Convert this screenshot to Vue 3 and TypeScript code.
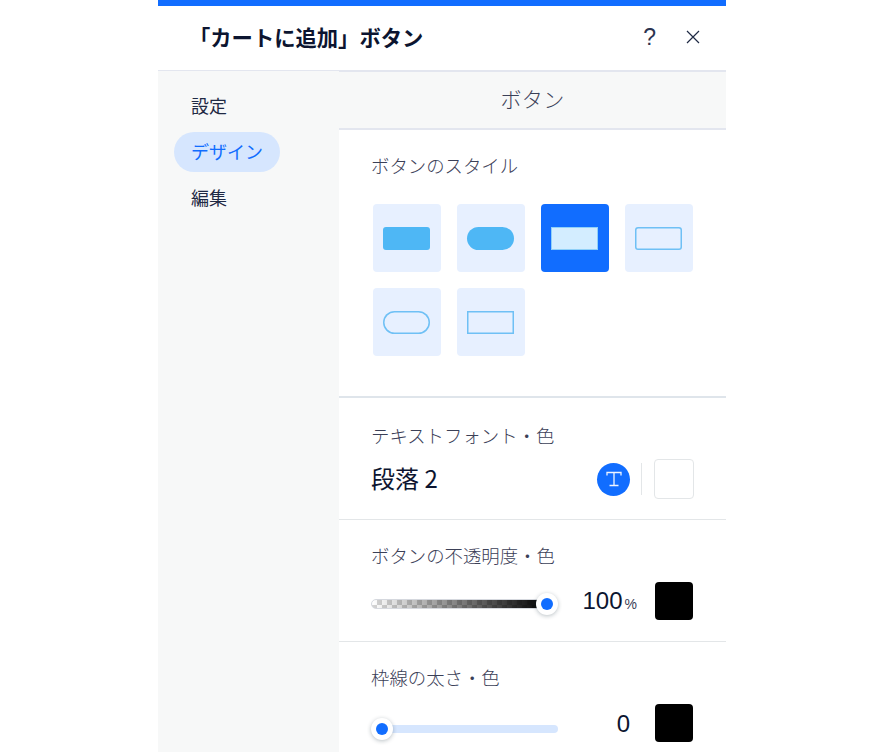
<script setup lang="ts">
interface Tile { id: number; shape: string; active?: boolean }
const tiles: Tile[] = [
  { id: 1, shape: 'fill-round' },
  { id: 2, shape: 'fill-pill' },
  { id: 3, shape: 'fill-square', active: true },
  { id: 4, shape: 'line-round' },
  { id: 5, shape: 'line-pill' },
  { id: 6, shape: 'line-square' },
]
</script>

<template>
  <div class="page">
    <div class="panel">
      <header class="head">
        <h1 class="title">「カートに追加」ボタン</h1>
        <div class="head-actions">
          <span class="help">?</span>
          <svg class="close" width="14" height="14" viewBox="0 0 14 14" aria-label="閉じる">
            <path d="M1 1 L13 13 M13 1 L1 13" stroke="#1f2a44" stroke-width="1.2" fill="none" />
          </svg>
        </div>
      </header>
      <div class="body">
        <nav class="side">
          <div class="nav-item">設定</div>
          <div class="nav-item current">デザイン</div>
          <div class="nav-item">編集</div>
        </nav>
        <main class="content">
          <div class="band">ボタン</div>
          <section class="sec-style">
            <div class="label">ボタンのスタイル</div>
            <div class="tiles">
              <div v-for="t in tiles" :key="t.id" class="tile" :class="{ active: t.active }">
                <span class="shape" :class="t.shape"></span>
              </div>
            </div>
          </section>
          <section class="sec-font">
            <div class="label">テキストフォント・色</div>
            <div class="font-row">
              <span class="para">段落 2</span>
              <span class="t-btn">
                <svg width="18" height="18" viewBox="0 0 18 18">
                  <path d="M2 5.5V2.5H16V5.5M9 2.5V15.5M4.5 15.5H13.5" stroke="#eef4ff" stroke-width="1.3" fill="none" />
                </svg>
              </span>
              <span class="vline"></span>
              <span class="swatch white"></span>
            </div>
          </section>
          <section class="sec-slider">
            <div class="label">ボタンの不透明度・色</div>
            <div class="slider-row">
              <div class="track checker">
                <span class="knob at-end"></span>
              </div>
              <div class="value"><span>100</span><small>%</small></div>
              <span class="swatch black"></span>
            </div>
          </section>
          <section class="sec-slider last">
            <div class="label">枠線の太さ・色</div>
            <div class="slider-row">
              <div class="track plain">
                <span class="knob at-start"></span>
              </div>
              <div class="value zero"><span>0</span></div>
              <span class="swatch black"></span>
            </div>
          </section>
        </main>
      </div>
    </div>
  </div>
</template>

<style>
html, body { margin: 0; background: #fff; overflow: hidden; }
</style>

<style scoped>
.page {
  width: 874px;
  height: 752px;
  overflow: hidden;
  font-family: "Noto Sans CJK JP", "Noto Sans", "Liberation Sans", sans-serif;
  color: #1f2a44;
}
.panel {
  width: 568px;
  height: 752px;
  margin-left: 158px;
  border-top: 6px solid #116dff;
  box-sizing: border-box;
  display: flex;
  flex-direction: column;
  overflow: hidden;
  background: #fff;
}
.head {
  height: 65px;
  flex: none;
  display: flex;
  align-items: center;
  justify-content: space-between;
  padding: 0 26px 3px 31px;
  box-sizing: border-box;
  border-bottom: 1px solid #e3e6ef;
}
.title {
  margin: 0;
  font-size: 21.3px;
  font-weight: 700;
  color: #0c1530;
  line-height: 28px;
}
.head-actions {
  display: flex;
  align-items: center;
  gap: 30px;
}
.help {
  font-family: "Liberation Sans", sans-serif;
  font-size: 23px;
  line-height: 24px;
  font-weight: 400;
  color: #2b3350;
}
.close { display: block; }
.body {
  flex: 1;
  min-height: 0;
  display: flex;
}
.side {
  width: 181px;
  flex: none;
  background: #f7f8f8;
  padding: 15px 0 0 16px;
  box-sizing: border-box;
  display: flex;
  flex-direction: column;
  gap: 6px;
}
.nav-item {
  align-self: flex-start;
  height: 40px;
  line-height: 38px;
  padding: 0 17px;
  font-size: 18px;
  border-radius: 20px;
  color: #1f2a44;
}
.nav-item.current {
  background: #d6e6fe;
  color: #116dff;
}
.content {
  flex: 1;
  min-width: 0;
  display: flex;
  flex-direction: column;
}
.band {
  height: 59px;
  flex: none;
  box-sizing: border-box;
  background: #f7f8f8;
  border-top: 1px solid #e3e6ef;
  border-bottom: 2px solid #e3e6ef;
  text-align: center;
  line-height: 52px;
  font-size: 21px;
  font-weight: 300;
  letter-spacing: 0.4px;
  color: #3b4057;
}
.label {
  font-size: 18.4px;
  line-height: 24px;
  font-weight: 300;
  color: #3b4057;
}
.sec-style {
  height: 268px;
  flex: none;
  box-sizing: border-box;
  padding: 23px 32px 0;
  border-bottom: 2px solid #dfe5eb;
}
.tiles {
  display: grid;
  grid-template-columns: repeat(4, 68px);
  gap: 16px;
  margin: 27px 0 0 2px;
}
.tile {
  width: 68px;
  height: 68px;
  border-radius: 4px;
  background: #e7f0ff;
  display: flex;
  align-items: center;
  justify-content: center;
}
.tile.active { background: #116dff; }
.shape {
  display: block;
  width: 47px;
  height: 23px;
  margin-right: 2px;
  box-sizing: border-box;
}
.fill-round { background: #4eb7f5; border-radius: 3px; }
.fill-pill { background: #4eb7f5; border-radius: 12px; }
.fill-square { background: #d3edff; box-shadow: inset 0 0 0 1px #8fd0f8; }
.line-round { box-shadow: inset 0 0 0 1.5px #6fc0f5; border-radius: 3px; }
.line-pill { box-shadow: inset 0 0 0 1.5px #6fc0f5; border-radius: 12px; }
.line-square { box-shadow: inset 0 0 0 1.5px #6fc0f5; }
.sec-font {
  height: 122px;
  flex: none;
  box-sizing: border-box;
  padding: 25px 32px 0;
  border-bottom: 1px solid #e3e6e8;
}
.font-row {
  display: flex;
  align-items: center;
  height: 40px;
  margin-top: 12px;
}
.para {
  flex: 1;
  font-size: 24px;
  line-height: 36px;
  padding-bottom: 2px;
  font-weight: 400;
  color: #0c1530;
}
.t-btn {
  width: 33px;
  height: 33px;
  border-radius: 50%;
  background: #116dff;
  display: flex;
  align-items: center;
  justify-content: center;
}
.vline {
  width: 1px;
  height: 32px;
  background: #e3e6e8;
  margin: 0 12px 0 11px;
}
.swatch {
  width: 38px;
  height: 38px;
  border-radius: 4px;
  box-sizing: border-box;
  flex: none;
}
.swatch.white {
  width: 40px;
  height: 40px;
  border: 1px solid #e3e6e8;
}
.swatch.black { background: #000; }
.sec-slider {
  height: 122px;
  flex: none;
  box-sizing: border-box;
  padding: 23px 33px 0 32px;
  border-bottom: 1px solid #e3e6e8;
}
.sec-slider.last { border-bottom: 0; }
.slider-row {
  display: flex;
  align-items: center;
  height: 38px;
  margin-top: 15px;
}
.track {
  width: 187px;
  height: 10px;
  border-radius: 5px;
  position: relative;
  flex: none;
  box-sizing: border-box;
}
.checker {
  width: 176px;
  margin-right: 11px;
  margin-top: 6px;
  border: 1px solid #d5d8de;
  background:
    linear-gradient(90deg, rgba(0, 0, 0, 0), #000),
    repeating-conic-gradient(#d4d4d4 0 25%, #fff 0 50%) 0 0 / 10px 10px;
}
.plain {
  height: 8px;
  margin-top: 12px;
  background: #d6e6fe;
}
.knob {
  position: absolute;
  top: 50%;
  width: 22px;
  height: 22px;
  border-radius: 50%;
  background: #fff;
  box-shadow: 0 1px 4px rgba(22, 45, 61, 0.3);
  transform: translateY(-50%);
}
.knob::after {
  content: "";
  position: absolute;
  left: 5px;
  top: 5px;
  width: 12px;
  height: 12px;
  border-radius: 50%;
  background: #116dff;
}
.at-end { right: -12px; }
.at-start { left: 0; }
.value {
  flex: 1;
  text-align: right;
  padding-right: 18px;
  padding-top: 2px;
  font-family: "Liberation Sans", sans-serif;
  font-size: 24px;
  line-height: 38px;
  color: #0c1530;
  font-weight: 400;
}
.value small {
  font-size: 14px;
  color: #3b4057;
  margin-left: 2px;
}
.value.zero { padding-right: 25px; }
</style>
